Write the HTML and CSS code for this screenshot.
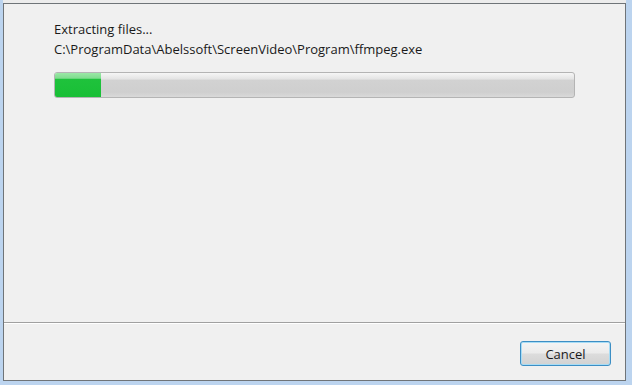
FILE: index.html
```html
<!DOCTYPE html>
<html lang="en">
<head>
    <meta charset="UTF-8">
    <meta name="viewport" content="width=device-width, initial-scale=1.0">
    <title>Extracting files</title>
    <link rel="stylesheet" href="styles.css">
</head>
<body>
    <div class="window">
        <div class="content">
            <div class="status">Extracting files...</div>
            <div class="status">C:\ProgramData\Abelssoft\ScreenVideo\Program\ffmpeg.exe</div>
            <div class="progress">
                <div class="progress-fill" style="width: 46px"></div>
            </div>
        </div>
        <div class="footer">
            <button class="cancel">Cancel</button>
        </div>
    </div>
</body>
</html>
```

FILE: styles.css
```css
body {
    margin: 0;
    padding: 0;
    height: 385px;
    background: #bcd4ef;
    font-family: "Open Sans", "Liberation Sans", sans-serif;
    font-size: 13px;
    color: #1a1a1a;
    overflow: hidden;
}
.window {
    margin: 3px 6px 0 3px;
    height: 376px;
    border: 1px solid #6f7478;
    background: #f0f0f0;
    display: flex;
    flex-direction: column;
    box-shadow: 0 -3px 0 #ececec;
}
.content {
    flex: 1;
    padding: 15px 0 0 50px;
    border-bottom: 1px solid #a0a0a0;
}
.status {
    line-height: 20px;
    white-space: nowrap;
}
.progress {
    margin-top: 13px;
    width: 519px;
    height: 24px;
    border: 1px solid #b4b4b4;
    border-radius: 3px;
    background: linear-gradient(#f6f6f6 0%, #e4e4e4 25%, #d2d2d2 30%, #cfcfcf 80%, #d9d9d9 100%);
    overflow: hidden;
}
.progress-fill {
    height: 100%;
    background: linear-gradient(#9be8a6 0%, #7fdc8e 22%, #1fc23c 26%, #19bf36 100%);
}
.footer {
    height: 57px;
    border-top: 1px solid #ffffff;
    display: flex;
    justify-content: flex-end;
    align-items: flex-start;
    padding: 17px 14px 0 0;
    box-sizing: border-box;
}
.cancel {
    width: 91px;
    height: 25px;
    border: 1px solid #3c8ec4;
    border-radius: 3px;
    background: linear-gradient(#f4f4f4 0%, #ebebeb 48%, #dcdcdc 52%, #d2d2d2 100%);
    box-shadow: inset 0 0 0 1px #a7dcf5;
    font-family: inherit;
    font-size: 13px;
    color: #1a1a1a;
    padding: 0;
}
```
